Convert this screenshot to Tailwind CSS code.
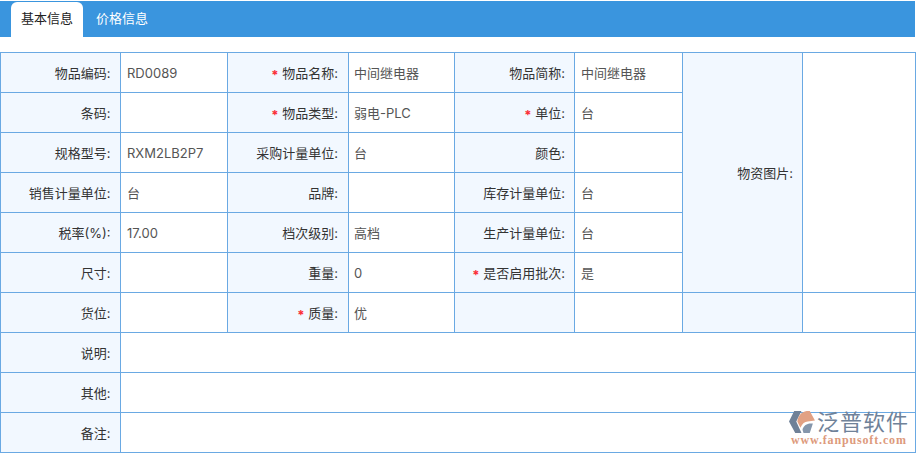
<!DOCTYPE html>
<html lang="zh">

<head>
  <meta charset="UTF-8">
  <title>物品信息</title>
  <script src="https://cdn.jsdelivr.net/npm/@tailwindcss/browser@4"></script>
</head>

<body class="bg-white font-['Inter','Noto_Sans_CJK_SC',sans-serif] text-[13px] text-[#333]">
  <div class="relative h-[455px] w-[919px] overflow-hidden pt-px">

    <!-- Onglets -->
    <div class="flex h-9 w-[915px] items-end bg-[#3a95de] pl-[11px]">
      <div class="flex h-[35px] w-[72px] items-center justify-center rounded-t-md bg-white pb-px text-[#222]">基本信息</div>
      <div class="flex h-[35px] w-[78px] items-center justify-center pb-px text-white">价格信息</div>
    </div>

    <!-- Formulaire -->
    <table class="mt-[15px] w-[915px] table-fixed border-collapse [&_td]:h-10 [&_td]:border [&_td]:border-[#6aa9e3] [&_td]:px-[6px] [&_td]:pt-[2px] [&_td]:text-[#555] [&_td:nth-child(4)]:pl-[5px] [&_th]:h-10 [&_th]:border [&_th]:border-[#6aa9e3] [&_th]:bg-[#f2f8ff] [&_th]:pr-[9px] [&_th]:pt-[2px] [&_th]:text-right [&_th]:font-normal [&_th]:text-[#333] [&_th:nth-child(1)]:pr-[9.5px] [&_th:nth-child(3)]:pr-[10px]">
      <colgroup>
        <col class="w-[120px]">
        <col class="w-[107px]">
        <col class="w-[121px]">
        <col class="w-[106px]">
        <col class="w-[120px]">
        <col class="w-[108px]">
        <col class="w-[120px]">
        <col class="w-[113px]">
      </colgroup>
      <tr>
        <th>物品编码:</th>
        <td>RD0089</td>
        <th><span class="align-[-2px] font-bold leading-none text-red-500">*</span> 物品名称:</th>
        <td>中间继电器</td>
        <th>物品简称:</th>
        <td>中间继电器</td>
        <th rowspan="6">物资图片:</th>
        <td rowspan="6"></td>
      </tr>
      <tr>
        <th>条码:</th>
        <td></td>
        <th><span class="align-[-2px] font-bold leading-none text-red-500">*</span> 物品类型:</th>
        <td>弱电-PLC</td>
        <th><span class="align-[-2px] font-bold leading-none text-red-500">*</span> 单位:</th>
        <td>台</td>
      </tr>
      <tr>
        <th>规格型号:</th>
        <td>RXM2LB2P7</td>
        <th>采购计量单位:</th>
        <td>台</td>
        <th>颜色:</th>
        <td></td>
      </tr>
      <tr>
        <th>销售计量单位:</th>
        <td>台</td>
        <th>品牌:</th>
        <td></td>
        <th>库存计量单位:</th>
        <td>台</td>
      </tr>
      <tr>
        <th>税率(%):</th>
        <td>17.00</td>
        <th>档次级别:</th>
        <td>高档</td>
        <th>生产计量单位:</th>
        <td>台</td>
      </tr>
      <tr>
        <th>尺寸:</th>
        <td></td>
        <th>重量:</th>
        <td>0</td>
        <th><span class="align-[-2px] font-bold leading-none text-red-500">*</span> 是否启用批次:</th>
        <td>是</td>
      </tr>
      <tr>
        <th>货位:</th>
        <td></td>
        <th><span class="align-[-2px] font-bold leading-none text-red-500">*</span> 质量:</th>
        <td>优</td>
        <th></th>
        <td></td>
        <th></th>
        <td></td>
      </tr>
      <tr>
        <th>说明:</th>
        <td colspan="7"></td>
      </tr>
      <tr>
        <th>其他:</th>
        <td colspan="7"></td>
      </tr>
      <tr>
        <th>备注:</th>
        <td colspan="7"></td>
      </tr>
    </table>

    <!-- Filigrane -->
    <div class="absolute left-[789px] top-[410px] w-[126px]">
      <div class="flex items-center">
        <svg class="h-[24px] w-[27px] shrink-0" viewBox="0 0 26 23">
          <path d="M5 1h7L7 11l5 11H6L0 11z" fill="#6f8198"/>
          <path d="M8 11C9 5 12 2 17 1h3l5 9-7 1c-3 0-5 2-7 6z" fill="#e2a183"/>
          <path d="M13 19c1-4 4-6 8-6h2l-3 9h-6z" fill="#8596ab"/>
        </svg>
        <span class="whitespace-nowrap pl-px text-[22px] leading-[24px] tracking-[1px] text-[#6f8299]">泛普软件</span>
      </div>
      <div class="whitespace-nowrap pl-[2px] font-['Liberation_Serif',serif] text-[12px] font-bold leading-[12px] tracking-[0.85px] text-[#dd9a7c]">www.fanpusoft.com</div>
    </div>
  </div>
</body>

</html>
